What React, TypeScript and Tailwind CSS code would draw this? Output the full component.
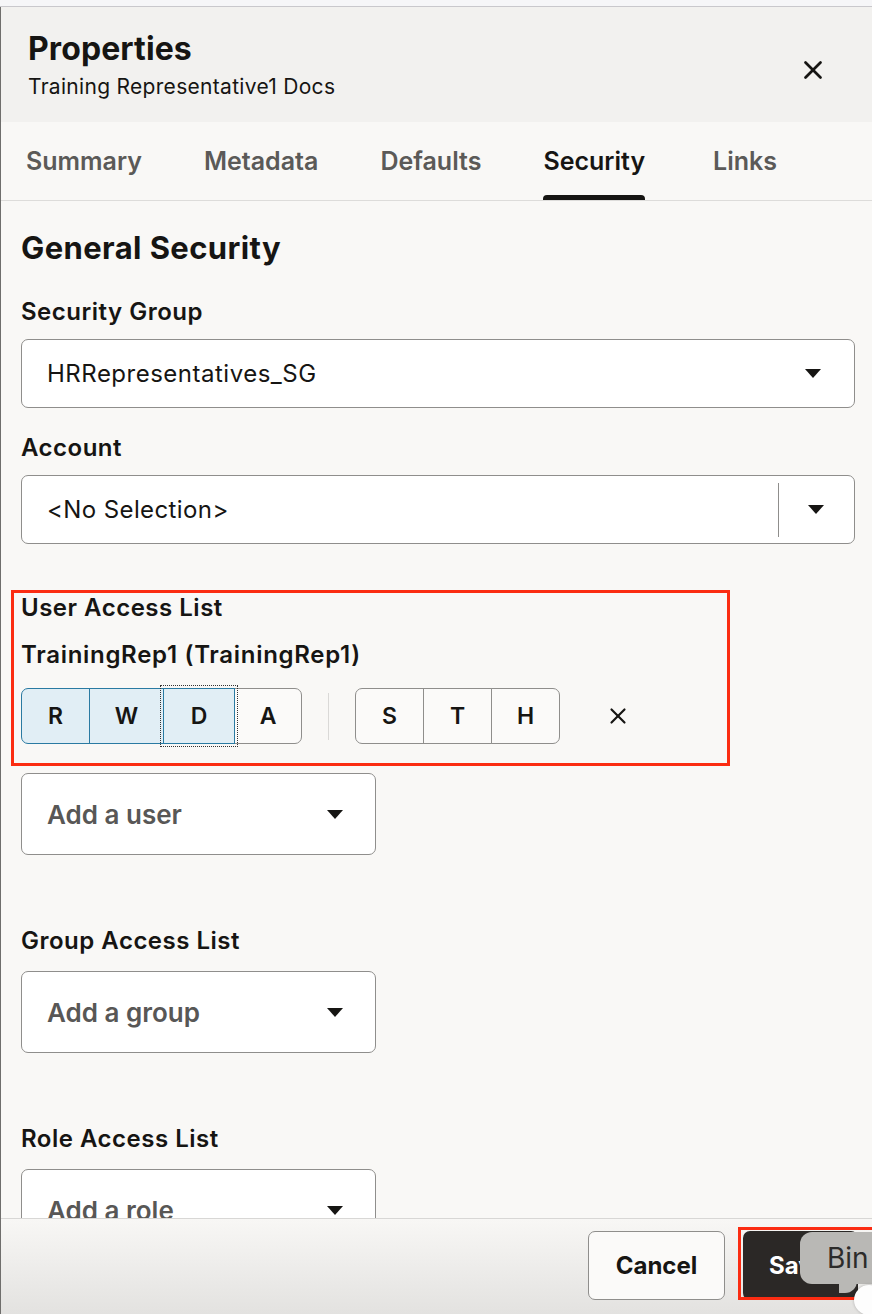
import { X } from "lucide-react";

const tabs = ["Summary", "Metadata", "Defaults", "Security", "Links"];

const perms: { key: string; w: string; on: boolean; focus?: boolean }[] = [
  { key: "R", w: "w-[69px]", on: true },
  { key: "W", w: "w-[75px]", on: true },
  { key: "D", w: "w-[72px]", on: true, focus: true },
  { key: "A", w: "w-[68px]", on: false },
];

const extras = ["S", "T", "H"];

function Caret() {
  return (
    <svg width="16" height="9" viewBox="0 0 16 9" aria-hidden>
      <path d="M0 0 L16 0 L8 9 Z" fill="#161513" />
    </svg>
  );
}

function Label({ children, className = "" }: { children: string; className?: string }) {
  return (
    <div
      className={`text-[24px] font-semibold leading-[28px] tracking-[0.5px] text-[#161513] ${className}`}
    >
      {children}
    </div>
  );
}

function AddSelect({ text, className = "" }: { text: string; className?: string }) {
  return (
    <div
      className={`flex h-[82px] w-[355px] items-center justify-between rounded-[7px] border border-[#8f8e8c] bg-white pl-[25px] pr-[32px] ${className}`}
    >
      <span className="text-[26px] font-semibold text-[#585756]">{text}</span>
      <Caret />
    </div>
  );
}

export default function App() {
  return (
    <div className="flex h-[1314px] w-[872px] flex-col overflow-hidden bg-[#f9f8f6] font-['Inter',sans-serif] text-[#161513]">
      <div className="h-[7px] shrink-0 border-b border-[#c9c8cc] bg-[#f6f6f8]" />
      <div className="flex min-h-0 flex-1 flex-col border-l border-[#6f6e6c]">
        {/* header */}
        <header className="flex h-[115px] shrink-0 items-start justify-between bg-[#f2f1ef] pl-[27px] pr-[44px] pt-[24px]">
          <div>
            <h1 className="text-[32px] font-bold leading-[36px] tracking-[0.1px]">Properties</h1>
            <p className="mt-[7px] text-[21px] leading-[26px] tracking-[0.3px]">
              Training Representative1 Docs
            </p>
          </div>
          <X className="mt-[24px] h-[30px] w-[30px]" strokeWidth={2.2} />
        </header>

        {/* tabs */}
        <nav className="flex h-[79px] shrink-0 items-end gap-[50px] border-b border-[#dddcda] pl-[19px]">
          {tabs.map((t) => {
            const active = t === "Security";
            return (
              <div
                key={t}
                className={`flex flex-col items-center px-[6px] ${t === "Links" ? "ml-[6px]" : ""}`}
              >
                <span
                  className={`text-[25px] font-semibold leading-[30px] ${active ? "text-[#161513]" : "text-[#5b5a58]"}`}
                >
                  {t}
                </span>
                <span
                  className={`mt-[19px] h-[5px] w-full rounded-t-[4px] ${active ? "bg-[#161513]" : "bg-transparent"}`}
                />
              </div>
            );
          })}
        </nav>

        {/* content */}
        <main className="min-h-0 flex-1 overflow-hidden pl-[20px] pr-[17px] pt-[29px]">
          <h2 className="text-[31px] font-bold leading-[36px] tracking-[0.4px]">General Security</h2>

          <Label className="mt-[32px]">Security Group</Label>
          <div className="mt-[13px] flex h-[69px] items-center justify-between rounded-[7px] border border-[#8f8e8c] bg-white pl-[25px] pr-[33px]">
            <span className="text-[24px] tracking-[0.5px]">HRRepresentatives_SG</span>
            <Caret />
          </div>

          <Label className="mt-[26px]">Account</Label>
          <div className="mt-[13px] flex h-[69px] items-center rounded-[7px] border border-[#8f8e8c] bg-white pl-[25px]">
            <span className="flex-1 text-[24px] tracking-[0.4px]">&lt;No Selection&gt;</span>
            <div className="h-[54px] w-px bg-[#8f8e8c]" />
            <div className="flex w-[75px] justify-center pr-[2px]">
              <Caret />
            </div>
          </div>

          {/* user access list */}
          <section className="relative mt-[50px]">
            <Label>User Access List</Label>
            <Label className="mt-[19px] tracking-[0.7px]">TrainingRep1 (TrainingRep1)</Label>
            <div className="mt-[19px] flex items-center">
              <div className="flex">
                {perms.map((p, i) => (
                  <button
                    key={p.key}
                    className={`${p.w} relative flex h-[56px] items-center justify-center border text-[23px] font-semibold ${
                      p.on ? "z-10 border-[#2a7aa2] bg-[#e1eef5]" : "border-[#8f8e8c] bg-[#fbfaf9]"
                    } ${i > 0 ? "-ml-px" : ""} ${i === 0 ? "rounded-l-[7px]" : ""} ${
                      i === perms.length - 1 ? "rounded-r-[7px]" : ""
                    } ${p.focus ? "outline-1 outline-offset-[2px] outline-dotted outline-[#333]" : ""}`}
                  >
                    {p.key}
                  </button>
                ))}
              </div>
              <div className="mx-[26px] h-[47px] w-px bg-[#dad9d7]" />
              <div className="flex">
                {extras.map((k, i) => (
                  <button
                    key={k}
                    className={`flex h-[56px] w-[69px] items-center justify-center border border-[#8f8e8c] bg-[#fbfaf9] text-[23px] font-semibold ${
                      i > 0 ? "-ml-px" : ""
                    } ${i === 0 ? "rounded-l-[7px]" : ""} ${i === extras.length - 1 ? "rounded-r-[7px]" : ""}`}
                  >
                    {k}
                  </button>
                ))}
              </div>
              <X className="ml-[45px] h-[26px] w-[26px]" strokeWidth={2} />
            </div>
            {/* annotation box */}
            <div className="pointer-events-none absolute -left-[10px] -top-[4px] h-[176px] w-[719px] border-[3px] border-[#fb2c12]" />
          </section>

          <AddSelect text="Add a user" className="mt-[29px]" />

          <Label className="mt-[72px]">Group Access List</Label>
          <AddSelect text="Add a group" className="mt-[16px]" />

          <Label className="mt-[72px]">Role Access List</Label>
          <AddSelect text="Add a role" className="mt-[16px]" />
        </main>

        {/* footer */}
        <footer className="relative flex h-[96px] shrink-0 items-start justify-end gap-[18px] border-t border-[#d8d7d5] bg-gradient-to-b from-[#f8f7f5] to-[#e3e2e0] pr-[14px] pt-[12px]">
          <button className="h-[69px] w-[137px] rounded-[7px] border border-[#8f8e8c] bg-[#fbfaf9] text-[24px] font-bold">
            Cancel
          </button>
          <button className="h-[69px] w-[115px] rounded-[7px] bg-[#2b2826] pl-[26px] text-left text-[24px] font-bold text-white">
            Save
          </button>
          <div className="pointer-events-none absolute left-[737px] top-[8px] h-[73px] w-[150px] border-[3px] border-[#fb2c12]" />
          <div className="absolute left-[799px] top-[13px] flex h-[52px] w-[90px] items-center rounded-[12px] bg-[#b9b8b5] pl-[27px] text-[28px] text-[#2c2b2a]">
            Bin
          </div>
          <div className="absolute left-[838px] top-[60px] h-[14px] w-[18px] rounded-br-[12px] bg-[#b9b8b5]" />
          <div className="absolute left-[853px] top-[66px] h-[30px] w-[30px] rounded-full bg-[#fdfdfd] shadow-[0_0_3px_rgba(0,0,0,0.25)]" />
        </footer>
      </div>
    </div>
  );
}
